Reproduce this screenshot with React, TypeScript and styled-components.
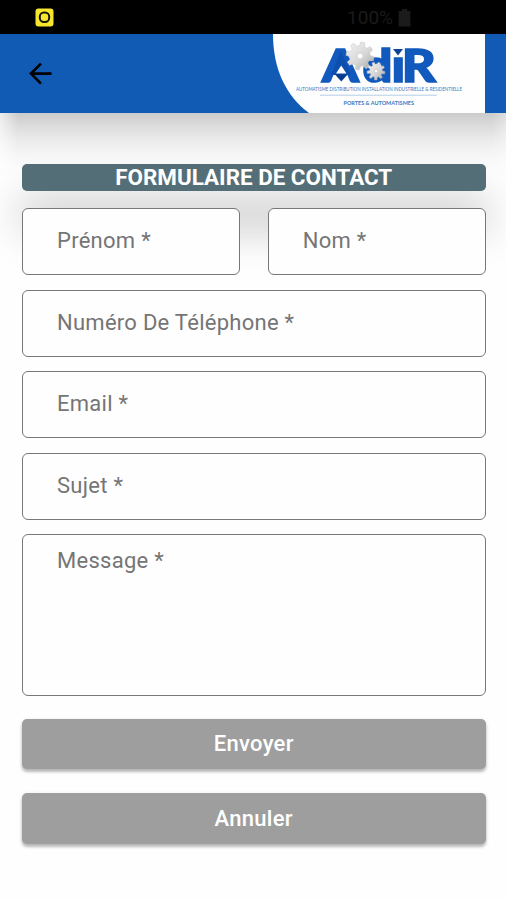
import React from "react";
import styled, { createGlobalStyle } from "styled-components";

const GlobalStyle = createGlobalStyle`
  * { box-sizing: border-box; }
  body { margin: 0; background: #fefefe; font-family: Roboto, sans-serif; }
`;

const Screen = styled.div`
  width: 506px;
  height: 900px;
  overflow: hidden;
  display: flex;
  flex-direction: column;
  background: #fefefe;
`;

const StatusBar = styled.header`
  height: 34px;
  flex: none;
  display: flex;
  align-items: center;
  justify-content: space-between;
  padding: 1px 95px 0 35px;
  background: #000;
`;

const BatteryStatus = styled.div`
  display: flex;
  align-items: center;
  gap: 5px;
  color: #1b1b1b;
  font-size: 19px;
  line-height: 24px;
`;

const AppBar = styled.nav`
  height: 79px;
  flex: none;
  display: flex;
  align-items: center;
  justify-content: space-between;
  padding: 0 21px 0 28px;
  background: #125bb5;
`;

const BackButton = styled.button`
  display: flex;
  padding: 0;
  border: 0;
  background: none;
`;

const Content = styled.main`
  flex: 1;
  display: flex;
  flex-direction: column;
  padding: 51px 20.5px 0 22px;
  background:
    linear-gradient(90deg, rgba(254, 254, 254, 0.65), rgba(254, 254, 254, 0) 18px),
    linear-gradient(270deg, rgba(254, 254, 254, 0.35), rgba(254, 254, 254, 0) 14px),
    linear-gradient(#cbcbcb 0, #d3d3d3 6px, #dedede 15px, #ebebeb 27px, #f5f5f5 40px, #fcfcfc 54px, #fefefe 66px);
`;

const Title = styled.h1`
  height: 26.5px;
  flex: none;
  margin: 0;
  border-radius: 5px;
  background: #546e77;
  color: #fff;
  font-size: 22.4px;
  font-weight: 700;
  line-height: 27px;
  text-align: center;
  box-shadow: 0 36px 42px 2px rgba(0, 0, 0, 0.22);
`;

const Form = styled.form`
  display: flex;
  flex-direction: column;
  gap: 14.5px;
  margin-top: 17.5px;
  position: relative;
`;

const FieldRow = styled.div`
  display: grid;
  grid-template-columns: 1fr 1fr;
  gap: 28px;
`;

const Field = styled.label<{ $tall?: boolean }>`
  height: ${(p) => (p.$tall ? "162px" : "67px")};
  padding: ${(p) => (p.$tall ? "12px" : "18px")} 34px 0;
  border: 1px solid #777;
  border-radius: 6px;
  background: #fefefe;
  color: #757575;
  font-size: 22px;
  line-height: 28px;
  letter-spacing: 0.27px;
`;

const Actions = styled.div`
  display: flex;
  flex-direction: column;
  gap: 24px;
  margin-top: 8px;
`;

const ActionButton = styled.button`
  height: 50.7px;
  padding: 0;
  border: 0;
  border-radius: 5px;
  background: #9e9e9e;
  color: #fff;
  font: 500 22px/50px Roboto, sans-serif;
  letter-spacing: 0.3px;
  box-shadow: 0 3px 3px rgba(0, 0, 0, 0.24), 0 1px 4px rgba(0, 0, 0, 0.1);
`;

function gearPath(cx: number, cy: number, outer: number, inner: number, teeth: number) {
  const points: string[] = [];
  for (let i = 0; i < teeth; i++) {
    const mid = (i / teeth) * Math.PI * 2 + 0.2;
    const step = Math.PI / teeth;
    [[-0.66, inner], [-0.36, outer], [0.36, outer], [0.66, inner]].forEach(([k, r]) => {
      const a = mid + k * step;
      points.push(`${(cx + Math.cos(a) * r).toFixed(2)} ${(cy + Math.sin(a) * r).toFixed(2)}`);
    });
  }
  return `M${points.join("L")}Z`;
}

const AppNotificationIcon = () => (
  <svg width="19" height="19" viewBox="0 0 19 19">
    <rect x="0.5" y="0.5" width="18" height="18" rx="3" fill="#f8e62c" />
    <rect x="4.8" y="4.6" width="9.4" height="9.4" rx="4.2" fill="none" stroke="#16150c" strokeWidth="2" />
  </svg>
);

const BatteryIcon = () => (
  <svg width="13" height="18" viewBox="0 0 13 18">
    <path d="M4 0h5v2h3.4v15.5H.6V2H4z" fill="#1b1b1b" />
  </svg>
);

const BackIcon = () => (
  <svg width="25" height="24" viewBox="0 0 25 24" fill="none" stroke="#000" strokeWidth="2.7">
    <path d="M23.5 11.6H2.8M13 1.6 3 11.6 13 21.6" />
  </svg>
);

const AdirLogo = () => (
  <svg width="213" height="79" viewBox="272 34 213 79">
    <defs>
      <linearGradient id="metal" x1="0" y1="0" x2="1" y2="1">
        <stop offset="0" stopColor="#f2f2f2" />
        <stop offset="0.55" stopColor="#d8d8d8" />
        <stop offset="1" stopColor="#a2a2a2" />
      </linearGradient>
    </defs>
    <path d="M273 34H485V113H309C286 96 273 69 273 34Z" fill="#fefefe" />
    <text
      transform="translate(322 82.4) scale(1.14 1)"
      x="0 35.6 61 70"
      fill="#1259bd"
      stroke="#1259bd"
      strokeWidth="1.6"
      fontFamily="Lato"
      fontWeight="900"
      fontSize="46"
    >
      AdiR
    </text>
    <path d="M341 51 351 75H331Z" fill="#0d4fae" />
    <path d="M391.2 44h13v13h-13z" fill="#fefefe" />
    <path d="M393 49h10l-5 6.6z" fill="#0a4499" />
    <path d="M341.2 65.5 346.4 73.5h-10.4z" fill="#fefefe" />
    <path d="M335 74.5h12.6L341.3 81.5z" fill="#073d8c" />
    <path d={gearPath(360, 56, 14, 10.3, 8)} fill="url(#metal)" stroke="#cecece" strokeWidth="0.6" />
    <circle cx="360" cy="56" r="3" fill="#fff" stroke="#c6c6c6" strokeWidth="0.7" />
    <path d={gearPath(376, 71, 9, 6.3, 9)} fill="url(#metal)" stroke="#bbb" strokeWidth="0.5" />
    <circle cx="376" cy="71" r="1.9" fill="#fff" stroke="#b5b5b5" strokeWidth="0.6" />
    <g fill="#3f76c0" fontFamily="Lato">
      <text x="296" y="91" fontSize="4.8" textLength="166" lengthAdjust="spacingAndGlyphs">
        AUTOMATISME DISTRIBUTION INSTALLATION INDUSTRIELLE &amp; RESIDENTIELLE
      </text>
      <text x="343.5" y="104.5" fontSize="5.6" fontWeight="700" textLength="70.5" lengthAdjust="spacingAndGlyphs">
        PORTES &amp; AUTOMATISMES
      </text>
    </g>
    <path d="M320 95.2H437" stroke="#b5cde8" strokeWidth="1" />
  </svg>
);

export default function App() {
  return (
    <Screen>
      <GlobalStyle />
      <StatusBar>
        <AppNotificationIcon />
        <BatteryStatus>
          <span>100%</span>
          <BatteryIcon />
        </BatteryStatus>
      </StatusBar>
      <AppBar>
        <BackButton aria-label="Retour">
          <BackIcon />
        </BackButton>
        <AdirLogo />
      </AppBar>
      <Content>
        <Title>FORMULAIRE DE CONTACT</Title>
        <Form>
          <FieldRow>
            <Field>Prénom *</Field>
            <Field>Nom *</Field>
          </FieldRow>
          <Field>Numéro De Téléphone *</Field>
          <Field>Email *</Field>
          <Field>Sujet *</Field>
          <Field $tall>Message *</Field>
          <Actions>
            <ActionButton type="button">Envoyer</ActionButton>
            <ActionButton type="button">Annuler</ActionButton>
          </Actions>
        </Form>
      </Content>
    </Screen>
  );
}
